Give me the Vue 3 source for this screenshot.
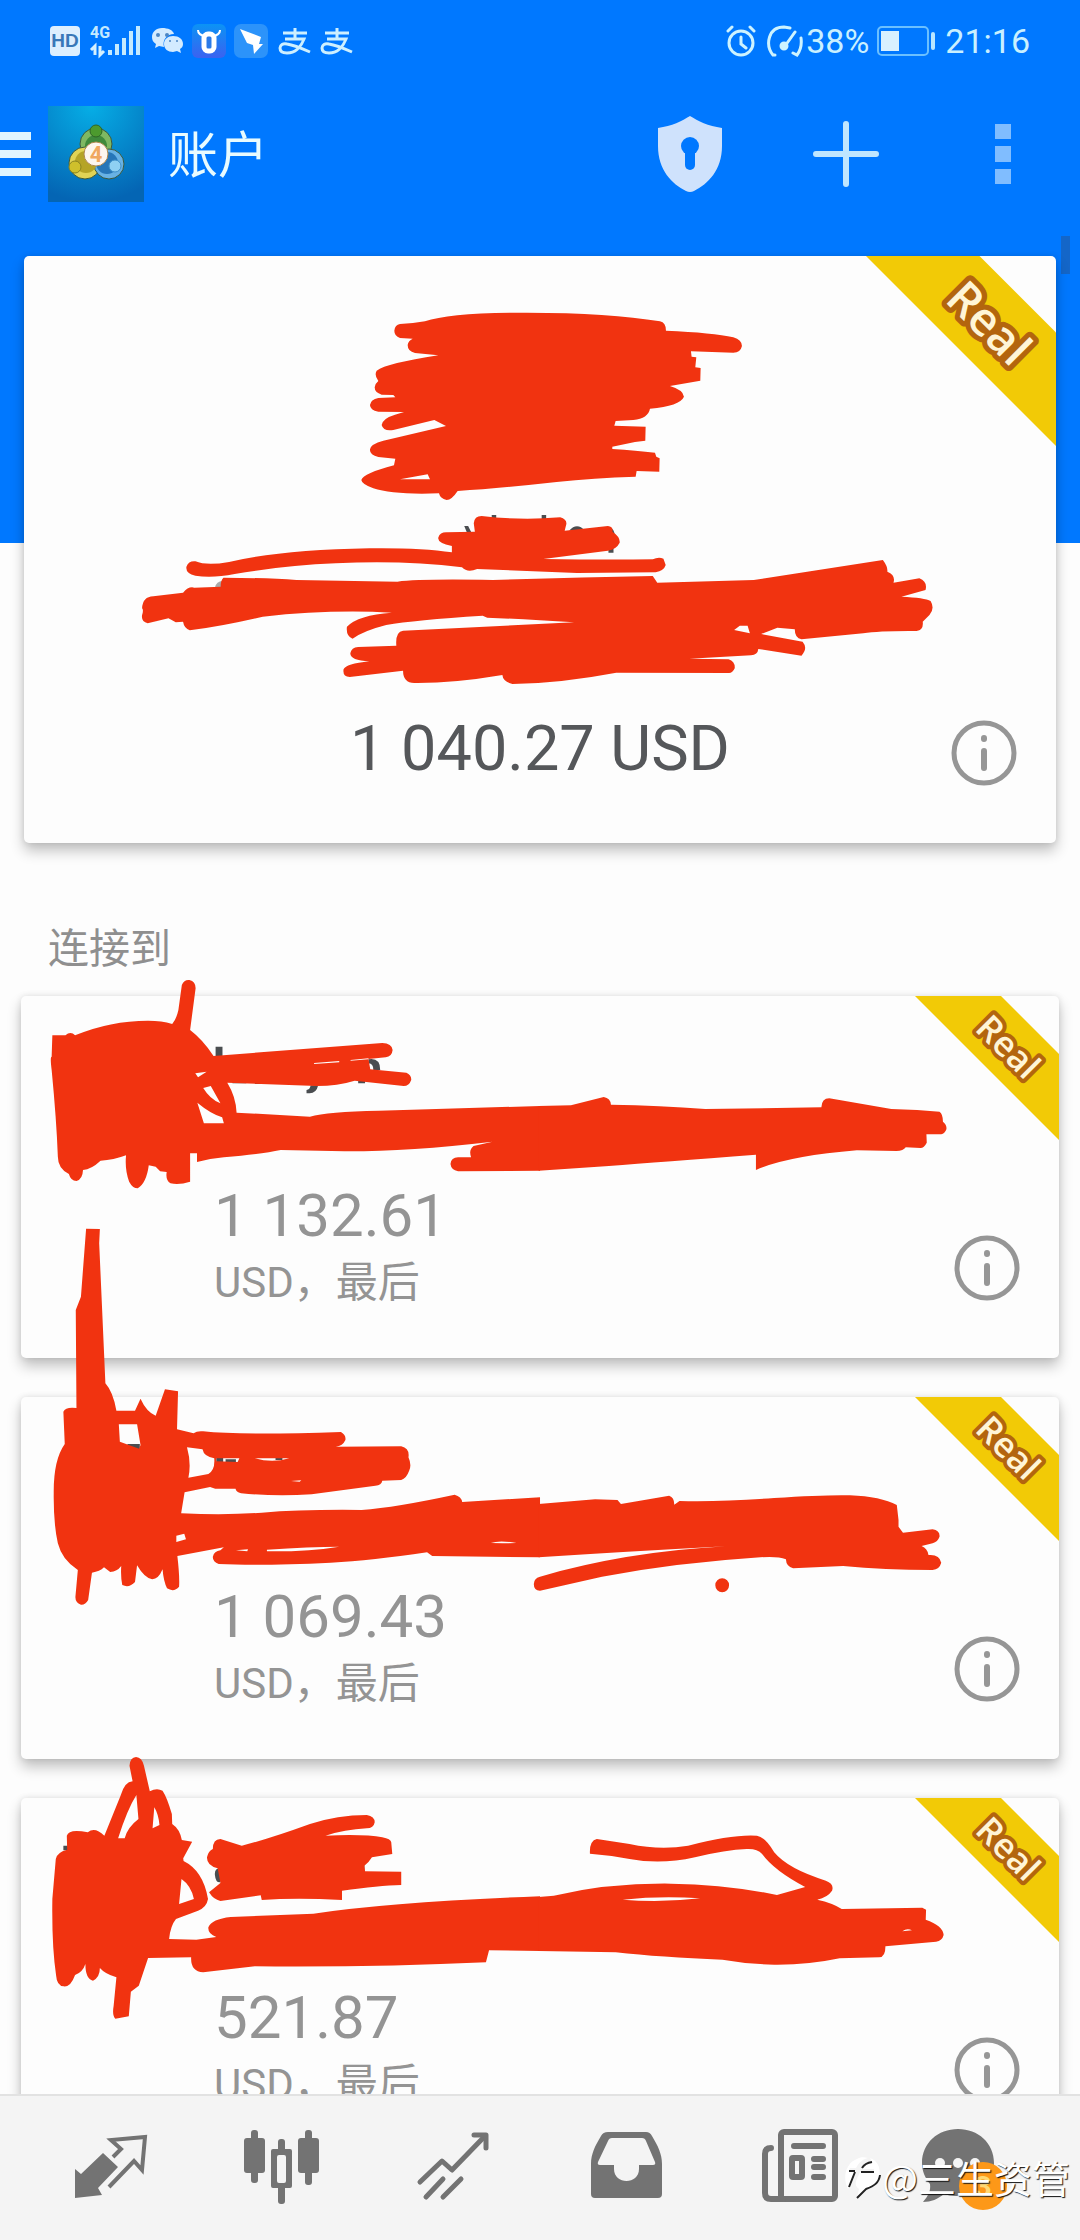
<template>
  <div class="app">
    <header class="header">
      <div class="status">
        <svg class="status-left" viewBox="0 0 310 36" aria-hidden="true">
          <rect x="0" y="3" width="30" height="30" rx="4" fill="#dcefff" />
          <text x="15" y="24" text-anchor="middle" class="hd">HD</text>
          <text x="40" y="15" class="net">4G</text>
          <path d="M45 32V23l-4 4M50 23v9l4-4" fill="none" stroke="#d6f1ff" stroke-width="3" />
          <path d="M60 32v-5M67 32V21M74 32V15M81 32V8M88 32V3" stroke="#c4eaff" stroke-width="4" />
          <g fill="#d3ebff">
            <path d="M112 5c-6 0-10 4-10 9 0 3 1 5 4 7l-1 4 4-2 5 1c-2-7 3-13 10-13-1-4-6-6-12-6z" />
            <path d="M123 13c-5 0-9 3-9 8s4 8 9 8l4-1 4 2-1-4c2-1 3-3 3-5 0-5-4-8-10-8z" />
          </g>
          <g fill="#4c86c4">
            <circle cx="108" cy="12" r="2" /><circle cx="117" cy="12" r="2" />
            <circle cx="120" cy="18" r="1" /><circle cx="127" cy="18" r="1" />
          </g>
          <rect x="142" y="1" width="34" height="34" rx="6" fill="url(#appBlue)" />
          <path d="M148 7q0 5 7 6M170 7q0 5-7 6" fill="none" stroke="#fff" stroke-width="2" />
          <rect x="154" y="11" width="10" height="17" rx="4" fill="#2b7ae8" stroke="#fff" stroke-width="5" />
          <rect x="184" y="1" width="34" height="34" rx="7" fill="#2c93fa" />
          <path d="M190 6l21 8-2 7h4l-9 10-1-9-6-2z" fill="#fff" />
          <g v-for="x in [229, 271]" :key="x" :transform="`translate(${x} 5)`" fill="none" stroke="#cdefff" stroke-width="3">
            <path d="M4 5h24M16 0v11M6 11h19c-3 8-9 14-17 14-5 0-7-2-7-5s3-5 7-4c7 1 14 4 23 8" />
          </g>
          <defs>
            <linearGradient id="appBlue" x1="0" y1="0" x2="0" y2="1">
              <stop offset="0" stop-color="#0b93f5" />
              <stop offset="1" stop-color="#3b62f0" />
            </linearGradient>
          </defs>
        </svg>
        <div class="status-right">
          <svg class="alarm" viewBox="0 0 30 32" fill="none" stroke="#cdf3ff" stroke-width="3" stroke-linecap="round" aria-hidden="true">
            <circle cx="15" cy="18" r="12" />
            <path d="M15 12v7l5 4M2 6l4-4M28 6l-4-4" />
          </svg>
          <svg class="gauge" viewBox="0 0 38 34" fill="none" stroke="#cdf3ff" stroke-width="3" stroke-linecap="round" aria-hidden="true">
            <path d="M9 31l-2 0C-1 21 2 3 18 3l6 1M35 14c1 7-1 13-4 17l-4-2M19 22L29 8" />
            <circle cx="18" cy="22" r="3" fill="#cdf3ff" />
          </svg>
          <span>38%</span>
          <svg class="battery" viewBox="0 0 60 30" aria-hidden="true">
            <rect x="1" y="1" width="50" height="28" rx="4" fill="none" stroke="#6bc0ff" stroke-width="2" />
            <rect x="4" y="5" width="18" height="20" fill="#d8f0ff" />
            <rect x="54" y="6" width="4" height="18" rx="2" fill="#b9e6ff" />
          </svg>
          <time>21:16</time>
        </div>
      </div>

      <div class="toolbar">
        <button class="menu" type="button" aria-label="菜单">
          <svg viewBox="0 0 31 46"><path d="M0 5h31M0 23h31M0 41h31" stroke="#dff5ff" stroke-width="8" /></svg>
        </button>
        <svg class="logo" viewBox="0 0 96 96" aria-hidden="true">
          <defs>
            <radialGradient id="logoBg" cx=".45" cy="0" r="1">
              <stop offset="0" stop-color="#06aee6" />
              <stop offset="1" stop-color="#0465b4" />
            </radialGradient>
          </defs>
          <rect width="96" height="96" fill="url(#logoBg)" />
          <g stroke="#3c5a3c" stroke-width="1">
            <circle cx="48" cy="38" r="16" fill="#7fb862" />
            <circle cx="37" cy="57" r="16" fill="#e0d355" />
            <circle cx="61" cy="58" r="15" fill="#68b2e4" />
          </g>
          <circle cx="48" cy="40" r="11" fill="#3f8a3c" />
          <circle cx="38" cy="56" r="11" fill="#b5a426" />
          <circle cx="59" cy="57" r="11" fill="#2676b8" />
          <circle cx="48" cy="25" r="6" fill="#4c9a2e" stroke="#2f6526" />
          <circle cx="27" cy="61" r="6" fill="#cfc02c" stroke="#8a8320" />
          <circle cx="67" cy="60" r="6" fill="#8fd0f2" stroke="#3d8fc8" />
          <circle cx="48" cy="48" r="12" fill="#fdf6ef" stroke="#b08a52" />
          <text x="48" y="56" text-anchor="middle" class="logo-num">4</text>
        </svg>
        <h1>账户</h1>
        <div class="actions">
          <button type="button" aria-label="安全">
            <svg class="shield" viewBox="0 0 64 76">
              <path d="M32 0c8 5 18 10 32 12v18c0 24-14 38-28 45q-4 2-8 0C14 68 0 54 0 30V12C14 10 24 5 32 0z" fill="#cfe2fc" />
              <circle cx="32" cy="30" r="9" fill="#0078ff" />
              <path d="M32 32v17" stroke="#0078ff" stroke-width="10" stroke-linecap="round" />
            </svg>
          </button>
          <button type="button" aria-label="添加">
            <svg class="plus" viewBox="0 0 66 66"><path d="M33 3v60M3 33h60" stroke="#bfe6ff" stroke-width="6" stroke-linecap="round" /></svg>
          </button>
          <button type="button" aria-label="更多">
            <svg class="more" viewBox="0 0 16 60" fill="#80bdff">
              <rect width="16" height="15" /><rect y="22" width="16" height="16" /><rect y="45" width="16" height="15" />
            </svg>
          </button>
        </div>
      </div>
    </header>

    <main class="content">
      <div class="scroll-thumb"></div>

      <section class="current">
        <article class="card hero">
          <svg class="ribbon" viewBox="0 0 144 144">
            <path d="M0 0h86l58 58v86z" />
            <text x="93" y="63" transform="rotate(45 93 51)">Real</text>
          </svg>
          <div class="hero-row">
            <strong>1 040.27 USD</strong>
            <button class="info" type="button" aria-label="详情">
              <svg viewBox="0 0 66 66"><use href="#info" /></svg>
            </button>
          </div>
          <svg class="marks" viewBox="0 0 1032 587" preserveAspectRatio="xMidYMin meet" aria-hidden="true">
            <g transform="translate(276 24) scale(.3333)">
              <path d="M300 132Q340 130 375 124Q450 98 680 98Q930 98 1080 124Q1098 128 1098 152Q1240 158 1300 172Q1326 180 1326 198Q1322 218 1300 218L1173 214L1175 230L1189 232L1186 262L1202 264L1201 302L1110 318Q1150 330 1152 350Q1140 378 1050 386Q1045 415 1000 420L947 423L943 437L1037 440L1036 482L1005 486L937 500L937 507Q1010 512 1065 518L1069 530L1079 535L1078 575L1010 573L1007 590Q880 594 770 606Q600 625 473 633Q455 660 440 660Q420 655 417 640Q280 645 220 625Q185 612 184 600Q190 580 282 556L286 536L235 531Q208 525 210 508Q212 492 250 482L438 438L403 420L280 450Q250 455 245 435Q248 415 285 404L312 396L235 395Q210 390 210 375Q212 358 235 354L286 352L280 345L245 344Q224 338 224 322Q226 310 235 303Q222 285 230 272Q260 250 415 226L345 219Q323 214 323 195Q325 182 338 176L300 174Q283 168 283 152Q285 134 300 132ZM300 598L383 583L390 598Z" />
            </g>
            <g transform="translate(76 244) scale(.5612 .3333)">
              <path class="ink" d="M649 78h7l6 20h-8zM698 45h8v12h-8zM787 45h8v12h-8zM836 92q14-26 28 0zM906 140h9v18h-9zM877 142h9v14h-9zM908 82q10 6 9 30h-9z" />
              <path class="ink faint" d="M205 262q2-18 14-20v20z" />
              <path d="M680 48Q750 62 820 52Q832 58 831 72L828 92L905 78Q915 80 913 95Q927 110 926 128Q920 148 905 152L790 177Q900 180 985 178Q995 170 1004 176L1008 195Q1005 212 990 217L850 219L672 207Q655 220 645 202Q540 180 420 190Q330 196 240 222Q200 235 170 227Q152 220 154 200Q158 182 170 184Q190 198 230 186Q320 150 480 145Q570 143 627 157L627 138Q600 128 603 112Q606 96 618 97L668 95L666 70Q667 48 680 48Z" />
              <path d="M220 233Q300 234 350 240L530 245Q570 236 700 240Q850 232 985 228L993 248L1165 240L1395 180Q1404 200 1403 215Q1418 225 1414 248L1460 235Q1475 245 1471 270L1428 290Q1470 293 1480 303Q1488 325 1478 345L1466 365Q1468 390 1455 393Q1390 392 1360 400L1250 418Q1238 415 1238 388L1207 383L1178 402L1252 425Q1262 445 1250 467L1173 447Q1172 465 1160 466L1050 476L1120 478Q1132 485 1131 505Q1127 520 1120 519L920 518Q820 550 735 552Q718 545 717 525Q630 550 560 549Q540 548 540 512L445 531Q432 530 434 508Q438 492 480 484Q446 482 446 460Q448 442 460 441L528 437Q526 395 540 392L845 367Q760 358 690 353L682 347Q560 360 510 375Q470 392 450 416Q438 408 440 380Q460 345 520 338Q410 328 290 350Q220 378 160 391Q150 385 148 365L135 367L122 355L85 370Q73 365 75 345Q78 330 75 325Q76 290 95 289L148 278Q158 258 168 263L215 260Q215 240 220 233ZM1130 390L1140 377L1154 377L1158 400Z" />
            </g>
          </svg>
        </article>
      </section>

      <h2>连接到</h2>

      <section class="list">
        <article v-for="item in accounts" :key="item.balance" class="card account">
          <svg class="ribbon" viewBox="0 0 144 144">
            <path d="M0 0h86l58 58v86z" />
            <text x="93" y="63" transform="rotate(45 93 51)">Real</text>
          </svg>
          <div class="account-text">
            <strong>{{ item.balance }}</strong>
            <span>USD，最后</span>
          </div>
          <button class="info" type="button" aria-label="详情">
            <svg viewBox="0 0 66 66"><use href="#info" /></svg>
          </button>
          <svg class="marks" viewBox="0 0 1038 362" preserveAspectRatio="xMidYMin meet" aria-hidden="true">
            <g :transform="`translate(-21 ${item.top}) scale(.3444 .3333)`">
              <path class="ink" :d="item.ink" />
              <path :d="item.left" />
            </g>
            <g :transform="`translate(519 ${item.top}) scale(.3444 .3333)`">
              <path :d="item.right" />
            </g>
          </svg>
        </article>
      </section>
    </main>

    <nav class="tabs">
      <a href="#quotes" aria-label="行情">
        <svg viewBox="0 0 84 84">
          <path d="M7 45v29l27-3-4-7 20-21-15-14-22 21z" fill="#737373" />
          <path d="M45 33l8-8-10-9 34-3-3 33-8-9-25 26" fill="none" stroke="#737373" stroke-width="4" />
        </svg>
      </a>
      <a href="#chart" aria-label="图表">
        <svg viewBox="0 0 84 84" fill="#737373">
          <rect x="4" y="14" width="21" height="35" rx="3" /><rect x="11" y="6" width="7" height="53" rx="3" />
          <path fill-rule="evenodd" d="M33 25h17q2 0 2 2v35q0 2-2 2H33q-2 0-2-2V27q0-2 2-2zM37 33v24q0 2 2 2h5q2 0 2-2V33q0-2-2-2h-5q-2 0-2 2z" />
          <rect x="38" y="15" width="7" height="13" rx="3" /><rect x="38" y="61" width="7" height="19" rx="3" />
          <rect x="58" y="14" width="21" height="35" rx="3" /><rect x="65" y="6" width="7" height="55" rx="3" />
        </svg>
      </a>
      <a href="#trade" aria-label="交易">
        <svg viewBox="0 0 84 84" fill="none" stroke="#737373" stroke-width="5" stroke-linecap="round" stroke-linejoin="round">
          <path d="M8 58l22-21 10 9 33-34M14 73l17-18M31 73l18-18" />
          <path d="M62 11h12v13" />
        </svg>
      </a>
      <a href="#history" aria-label="历史">
        <svg viewBox="0 0 84 84">
          <path fill="#737373" fill-rule="evenodd" d="M24 8h38q4 0 6 4c6 10 10 18 10 28v30q0 4-4 4H11q-4 0-4-4V40c0-10 4-18 10-28q2-4 7-4zM28 14q-3 0-4 3L14 38q-1 3 2 3h14v4c0 16 25 16 25 0v-4h14q3 0 2-3L62 17q-1-3-4-3z" />
        </svg>
      </a>
      <a href="#news" aria-label="新闻">
        <svg viewBox="0 0 84 84" fill="none" stroke="#737373" stroke-width="6" stroke-linecap="round">
          <rect x="25" y="8" width="54" height="67" rx="3" />
          <path d="M15 24q-6 0-6 6v39q0 6 6 6h12M38 22h29M58 35h9M58 43h9M58 53h9" />
          <rect x="36" y="34" width="10" height="19" rx="1" />
        </svg>
      </a>
      <a href="#chat" aria-label="消息">
        <svg class="chat" viewBox="0 0 96 84">
          <path d="M36 5c20 0 36 14 36 34S55 72 34 72c-4 0-9-1-12-2-6 5-13 8-21 8 5-6 8-11 7-18C3 54 0 47 0 39 0 19 16 5 36 5z" fill="#737373" />
          <circle cx="18" cy="39" r="5" fill="#f4f4f4" /><circle cx="36" cy="39" r="5" fill="#f4f4f4" /><circle cx="53" cy="39" r="5" fill="#f4f4f4" />
          <circle cx="61" cy="62" r="24" fill="#fd9818" />
          <text x="61" y="73" text-anchor="middle" class="badge">3</text>
        </svg>
      </a>
    </nav>

    <div class="watermark">
      <svg viewBox="0 0 38 44" aria-hidden="true">
        <path d="M13 4C2 8-2 22 4 34l7-18H5l1-3h6c3-6 7-9 12-10C20 2 16 2 13 4z" fill="#fff" />
        <path d="M26 3c8 3 11 10 9 19-2 8-10 10-16 13L13 42l2-8c-3-2-4-5-3-8l4-9h14v-3H18c2-4 4-6 11-6z" fill="#fff" />
        <path d="M5 16h6M11 17L5 32M18 13q3-5 10-6M17 17h13M36 20c-1 8-6 11-14 14l-9 9" fill="none" stroke="#222" stroke-width="2" />
      </svg>
      <span>@三生资管</span>
    </div>

    <svg class="defs" aria-hidden="true">
      <defs>
        <g id="info" fill="none" stroke="#969696" stroke-linecap="round">
          <circle cx="33" cy="33" r="30" stroke-width="5" />
          <path d="M33 18v1M33 31v17" stroke-width="6" />
        </g>
      </defs>
    </svg>
  </div>
</template>

<script setup>
const accounts = [
  {
    balance: '1 132.61',
    top: -36,
    ink: 'M626 260h20v34h-20zM1070 298q34-6 34 32h-20q0-20-14-20zM898 376h26q-6 26-28 24h-6v-10q10 0 12-14zM675 364h40v6h-40zM1040 360h20v10h-20zM740 364h24v8h-24z',
    left: 'M152 226L190 226Q205 212 218 226Q320 182 430 182Q470 182 500 192Q512 178 518 150L528 75Q535 58 550 60Q568 64 568 85L552 210Q590 240 620 288L1110 249Q1138 250 1140 270Q1138 290 1120 292L1070 297L1075 328L1180 338Q1195 345 1194 360Q1188 378 1172 378L1030 362Q980 378 920 378L660 368Q685 410 687 458L900 470Q950 455 1100 452L1568 438L1568 632L1330 634Q1310 630 1308 612Q1310 592 1330 592L1368 592Q1360 570 1375 558L1430 545Q1180 575 1000 574L815 570Q760 582 650 592Q610 596 572 606L572 580L552 580L552 665Q520 676 495 670Q480 660 484 636L465 634L452 620L432 616Q425 670 400 685Q385 685 375 665Q362 630 366 586Q330 600 292 602Q265 628 241 630Q240 658 222 663Q205 662 200 642Q168 625 168 590Q164 480 150 330Q145 290 150 290ZM567 340L600 335L575 352ZM590 384L612 378L640 430Q610 418 590 384ZM573 428Q610 460 645 472L650 490L592 490ZM912 309L985 303L985 307L912 312ZM1018 300L1070 295L1070 298L1018 302Z',
    right: 'M-4 438L90 436L185 411Q205 415 206 434Q350 436 480 447L817 442Q818 415 840 415L1020 447L1095 450L1160 455Q1170 462 1170 485Q1182 495 1180 508Q1175 522 1165 523L1122 523L1123 548Q1115 564 1105 564L1062 562Q1055 573 1035 573L920 571Q720 588 627 630L627 584Q350 606 200 618L-4 632Z'
  },
  {
    balance: '1 069.43',
    top: -27,
    ink: 'M370 222h36v16h-36zM628 264h20v12h-20zM655 268h30v10h-30zM800 264h20v6h-20z',
    left: 'M250 -424L290 -423L288 -380L306 40Q328 65 338 122Q370 122 392 122L408 86Q425 125 452 137L479 58L517 64L514 178L562 190Q572 182 590 184Q700 196 990 186Q1005 195 1003 210Q995 228 975 230L1165 229Q1190 235 1186 262Q1196 285 1188 302Q1180 325 1165 330L1110 332Q1108 345 1090 347L905 373Q800 380 700 370Q685 365 684 356L625 356L610 351L536 367L526 430Q660 436 760 428Q880 418 1050 420Q1150 412 1320 374Q1340 380 1342 396L1568 382L1568 562L1255 558L1240 547Q1080 572 960 578Q760 588 635 582Q617 575 618 560Q622 543 640 541L650 532L515 558Q522 620 520 650Q505 668 485 655Q475 635 472 598Q460 628 442 628Q420 625 398 586L392 636Q375 655 355 645Q350 620 352 588Q340 605 320 606L302 592Q290 605 267 608L256 690Q248 705 235 704Q218 698 219 680L226 600Q180 570 168 520Q155 460 156 370Q155 270 188 222L184 125Q190 110 222 114L220 -180L235 -220ZM345 163L398 163L408 225L404 236L348 215ZM543 232L588 238Q592 260 622 265Q625 300 605 312L547 323Q556 280 543 232ZM512 497L535 491L540 508L512 516ZM628 265L695 265L690 276L628 274ZM740 265L840 265Q790 280 740 265ZM775 539Q900 530 985 530Q900 545 775 544ZM685 541L720 538L718 544ZM845 333L875 331L870 335ZM1425 519Q1450 510 1500 519L1460 520Z',
    right: 'M-4 402L160 388L225 390L235 402L375 377Q390 382 390 404L405 393Q530 396 680 384Q830 374 900 376Q990 380 1036 405L1041 450L1041 470L1054 488L1140 478Q1162 482 1160 500Q1155 515 1140 520L1108 528Q1125 535 1128 555Q1160 552 1165 578Q1160 598 1140 600Q1000 600 880 588L735 595Q715 590 714 568Q690 558 640 562Q400 578 180 620L0 662Q-18 662 -18 642Q-18 625 0 620Q250 545 540 529Q250 545 -4 562ZM509 646a20 21 0 1 0 40 0a20 21 0 1 0 -40 0Z'
  },
  {
    balance: '521.87',
    top: -59,
    ink: 'M184 320h14v14h-14zM640 388q-18 0-16 20q2 24 16 22zM1046 374h12v26h-12z',
    left: 'M395 54Q412 55 418 80L435 157Q455 145 472 155Q485 175 499 225L500 255Q522 270 528 303L558 308L532 358L533 366Q590 395 604 480Q600 505 575 515L511 540Q495 560 491 600L570 602L628 594Q603 585 605 565Q615 540 670 534L910 524Q1150 488 1568 472L1568 636L1420 634L1411 670Q1100 685 740 682L590 700Q553 698 555 655L430 657L403 740L380 758L374 832L335 839Q325 830 330 800L338 715Q305 705 290 687Q290 715 270 725Q248 720 248 675Q240 700 218 708Q205 745 185 742Q165 740 163 710Q150 620 152 480L162 360Q165 340 195 332L194 290Q200 268 255 280Q275 262 303 290L350 170Q362 128 385 127L376 80Q378 55 395 54ZM396 168L402 240Q370 265 362 298L343 298Q370 210 396 168ZM448 205Q460 225 463 258L443 268ZM527 420Q555 440 563 480L520 495ZM640 300L702 320Q780 300 900 255Q980 228 1065 228Q1088 232 1088 250Q1085 268 1065 268Q1000 272 945 290Q1060 285 1110 295Q1135 300 1136 310L1139 345L1080 355Q1070 372 1058 380L1060 397L1165 398L1165 438Q1100 440 993 455L993 483Q860 476 760 483L757 469L640 486Q620 482 607 460L640 432L632 388Q600 380 601 355Q605 335 618 330Q618 300 640 300Z',
    right: 'M-4 474L40 470Q200 432 380 434Q540 436 688 468L770 444Q680 395 645 345Q630 328 600 330Q540 332 450 355Q350 378 260 360Q200 348 145 344Q143 305 165 300L260 315Q350 335 430 320Q560 285 630 290Q655 295 680 340Q720 390 830 425Q855 435 848 455Q835 475 805 482Q850 492 876 510L1110 506L1121 512L1120 542Q1170 560 1172 588Q1168 605 1150 608L1003 622Q1003 655 985 655L870 658Q780 678 680 677Q600 675 530 662Q350 655 220 640L-4 636ZM240 482Q350 470 465 478Q350 492 240 482ZM1052 577Q1066 566 1080 574Z'
  }
]
</script>

<style>
body {
  background: #fdfdfd;
}
</style>

<style scoped>
.app {
  position: relative;
  display: flex;
  flex-direction: column;
  height: 100vh;
  overflow: hidden;
  background: #fdfdfd;
  font-family: Roboto, "Noto Sans CJK SC", sans-serif;
}

button {
  display: flex;
  padding: 0;
  border: 0;
  background: none;
}

svg {
  display: block;
}

.defs {
  position: absolute;
  width: 0;
  height: 0;
}

.header {
  flex: none;
  background: #0078ff;
}

.status {
  display: flex;
  align-items: center;
  justify-content: space-between;
  height: 82px;
  padding: 0 50px;
}

.status-left {
  width: 310px;
  height: 36px;
}

.hd {
  font: 700 19px "Liberation Sans", sans-serif;
  fill: #3978b8;
}

.net {
  font: 700 16px Roboto, sans-serif;
  fill: #c4eaff;
}

.status-right {
  display: flex;
  align-items: center;
  color: #c9f0ff;
  font-size: 34px;
  line-height: 40px;
}

.alarm {
  width: 30px;
  height: 32px;
  margin-right: 10px;
}

.gauge {
  width: 38px;
  height: 34px;
  margin-right: 2px;
}

.battery {
  width: 60px;
  height: 30px;
  margin: 0 8px;
}

.toolbar {
  display: flex;
  align-items: center;
  height: 143px;
  padding-right: 69px;
}

.menu svg {
  width: 31px;
  height: 46px;
}

.logo {
  width: 96px;
  height: 96px;
  margin: 0 24px 0 17px;
}

.logo-num {
  font: 700 22px Roboto, sans-serif;
  fill: #f0a860;
}

h1 {
  margin: 0;
  padding-top: 4px;
  color: #e8fbff;
  font-size: 50px;
  font-weight: 400;
  line-height: 60px;
}

.actions {
  display: flex;
  align-items: center;
  margin-left: auto;
}

.shield {
  width: 64px;
  height: 76px;
}

.plus {
  width: 66px;
  height: 66px;
  margin: 0 116px 0 91px;
}

.more {
  width: 16px;
  height: 60px;
}

.content {
  position: relative;
  flex: 1;
  min-height: 0;
  overflow: hidden;
}

.scroll-thumb {
  position: absolute;
  top: 11px;
  right: 10px;
  width: 9px;
  height: 38px;
  background: #1466c8;
}

.current {
  padding: 31px 24px 0;
  background: linear-gradient(#0078ff 318px, transparent 318px);
}

.card {
  position: relative;
  border-radius: 5px;
  background: #fdfdfd;
  box-shadow: 0 8px 14px rgba(0, 0, 0, 0.24), 0 0 6px rgba(0, 0, 0, 0.1);
}

.hero {
  padding: 455px 39px 57px;
}

.hero-row {
  display: grid;
  grid-template-columns: 66px 1fr 66px;
  align-items: end;
}

.hero-row strong {
  grid-column: 2;
  color: #55575a;
  font-size: 63px;
  font-weight: 400;
  line-height: 75px;
  text-align: center;
}

.info svg {
  width: 66px;
  height: 66px;
}

.ribbon {
  position: absolute;
  top: 0;
  right: 0;
  width: 144px;
  height: 144px;
}

.hero .ribbon {
  width: 190px;
  height: 190px;
}

.ribbon path {
  fill: #f2ca06;
}

.ribbon text {
  font: 600 35px "Open Sans", sans-serif;
  text-anchor: middle;
  fill: #fff5d6;
  stroke: #b3650e;
  stroke-width: 8px;
  stroke-linejoin: round;
  paint-order: stroke;
}

.marks {
  position: absolute;
  top: 0;
  left: 0;
  width: 100%;
  overflow: visible;
  pointer-events: none;
}

.marks path {
  fill: #f13310;
  fill-rule: evenodd;
}

.marks .ink {
  fill: #4a4d50;
}

.marks .faint {
  fill: #a9a9a9;
}

h2 {
  margin: 76px 48px 17px;
  color: #8f8f8f;
  font-size: 41px;
  font-weight: 400;
  line-height: 60px;
}

.list {
  display: flex;
  flex-direction: column;
  gap: 39px;
  padding: 0 21px;
}

.account {
  display: flex;
  align-items: flex-end;
  justify-content: space-between;
  padding: 185px 39px 43px 193px;
}

.account-text {
  display: flex;
  flex-direction: column;
  color: #949494;
}

.account-text strong {
  font-size: 60px;
  font-weight: 400;
  line-height: 70px;
}

.account-text span {
  font-size: 42px;
  line-height: 64px;
}

.account .info {
  margin-bottom: 14px;
}

.tabs {
  display: flex;
  flex: none;
  align-items: flex-start;
  padding: 28px 24px 32px;
  border-top: 2px solid #e2e2e2;
  background: #f4f4f4;
}

.tabs a {
  display: flex;
  flex: 1;
  justify-content: center;
}

.tabs svg {
  width: 84px;
  height: 84px;
}

.tabs .chat {
  width: 96px;
  overflow: visible;
}

.badge {
  font: 700 30px Roboto, sans-serif;
  fill: #ffd873;
}

.watermark {
  position: absolute;
  right: 10px;
  bottom: 36px;
  display: flex;
  align-items: center;
  color: #fff;
  font-size: 38px;
  line-height: 54px;
  text-shadow: 1px 1px 1px #111;
}

.watermark span {
  font-family: "Noto Sans CJK SC", sans-serif;
}

.watermark svg {
  width: 38px;
  height: 44px;
}
</style>
